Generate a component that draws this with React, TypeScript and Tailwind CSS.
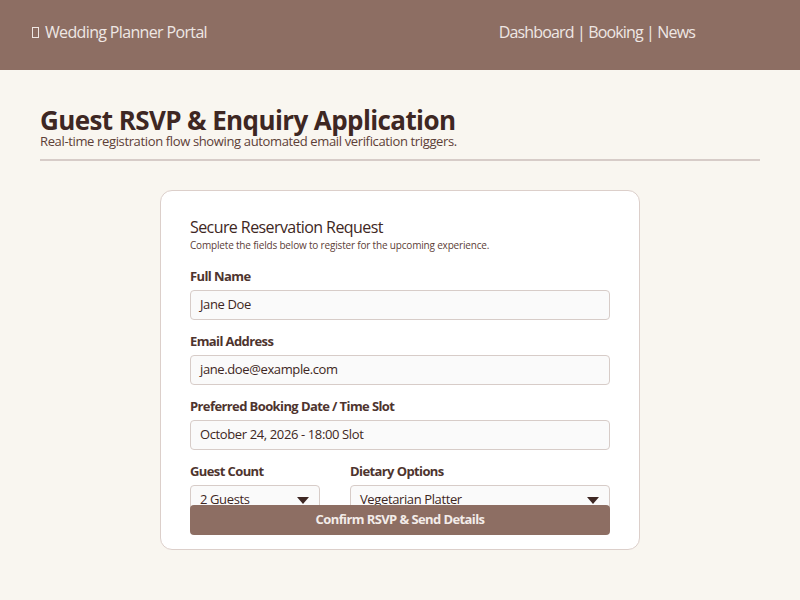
const fields = [
  { label: 'Full Name', value: 'Jane Doe' },
  { label: 'Email Address', value: 'jane.doe@example.com' },
  { label: 'Preferred Booking Date / Time Slot', value: 'October 24, 2026 - 18:00 Slot' },
];

const Caret = () => (
  <svg width="12" height="7" viewBox="0 0 12 7" className="shrink-0">
    <path d="M0 0 H12 L6 7 Z" fill="#3e2723" />
  </svg>
);

const SelectBox = ({ value }: { value: string }) => (
  <div className="flex h-[30px] items-center justify-between rounded-[4px] border border-[#d7ccc8] bg-[#fafafa] pl-[9px] pr-[10px] text-[13px] tracking-[-0.38px] text-[#3e2723]">
    <span>{value}</span>
    <Caret />
  </div>
);

const labelCls =
  'mb-[5px] block text-[13px] font-bold leading-[18px] tracking-[-0.6px] text-[#4e342e]';

export default function App() {
  return (
    <div
      className="min-h-[600px] bg-[#f9f6f0]"
      style={{ fontFamily: '"Open Sans", "Liberation Sans", sans-serif' }}
    >
      <header className="flex h-[70px] items-center justify-between bg-[#8d6e63] pb-[6px] pl-[32px] pr-[105px] text-[16px] text-[#efe7e4]">
        <div className="flex items-center gap-[6px] tracking-[-0.65px]">
          <span className="inline-block h-[11px] w-[7px] border border-[#efe7e4]" />
          <span>Wedding Planner Portal</span>
        </div>
        <nav className="tracking-[-0.85px]">Dashboard | Booking | News</nav>
      </header>

      <main className="px-[40px] pt-[35px]">
        <div className="border-b-2 border-[#d7ccc8] pb-[11px]">
          <h1 className="text-[26px] font-bold leading-[30px] tracking-[-0.6px] text-[#3e2723]">
            Guest RSVP &amp; Enquiry Application
          </h1>
          <p className="text-[13px] leading-[13px] tracking-[-0.36px] text-[#5d4037]">
            Real-time registration flow showing automated email verification triggers.
          </p>
        </div>

        <div className="mx-auto mt-[29px] h-[360px] w-[480px] rounded-[12px] border border-[#dccfca] bg-white px-[29px] pt-[25px]">
          <h2 className="text-[16px] leading-[22px] tracking-[-0.58px] text-[#3e2723]">
            Secure Reservation Request
          </h2>
          <p className="mb-[15px] text-[10px] leading-[14px] tracking-[-0.18px] text-[#5d4037]">
            Complete the fields below to register for the upcoming experience.
          </p>

          {fields.map((f) => (
            <div key={f.label} className="mb-[12px]">
              <label className={labelCls}>{f.label}</label>
              <div className="flex h-[30px] items-center rounded-[4px] border border-[#d7ccc8] bg-[#fafafa] px-[9px] text-[13px] tracking-[-0.38px] text-[#3e2723]">
                {f.value}
              </div>
            </div>
          ))}

          <div className="grid h-[43px] grid-cols-[1fr_2fr] gap-[30px]">
            <div>
              <label className={labelCls}>Guest Count</label>
              <SelectBox value="2 Guests" />
            </div>
            <div>
              <label className={labelCls}>Dietary Options</label>
              <SelectBox value="Vegetarian Platter" />
            </div>
          </div>

          <button className="relative flex h-[30px] w-full items-center justify-center rounded-[4px] bg-[#8d6e63] text-[13px] font-bold tracking-[-0.6px] text-[#f3ece9]">
            Confirm RSVP &amp; Send Details
          </button>
        </div>
      </main>
    </div>
  );
}
